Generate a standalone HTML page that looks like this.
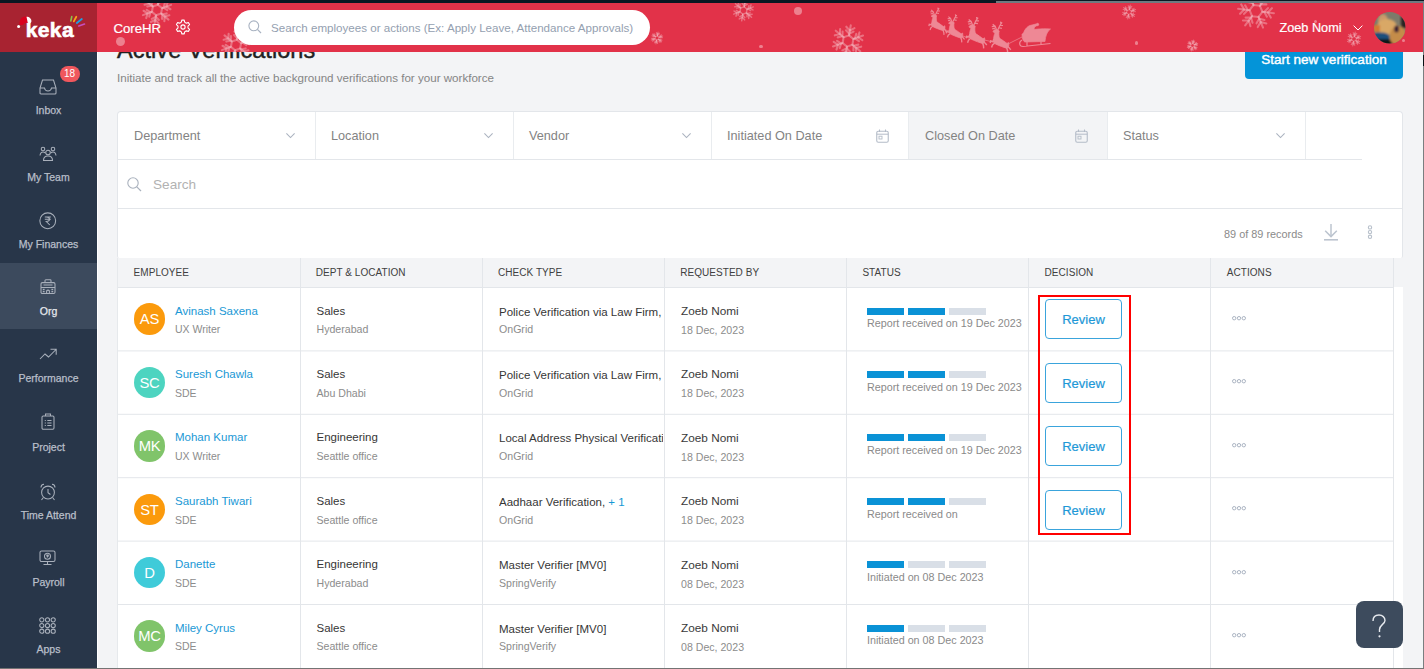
<!DOCTYPE html>
<html><head><meta charset="utf-8"><style>
*{box-sizing:border-box;margin:0;padding:0}
html,body{width:1424px;height:669px;overflow:hidden;background:#f3f4f6;font-family:"Liberation Sans",sans-serif}
body{position:relative}
.a{position:absolute}
.nw{white-space:nowrap}
svg{position:absolute;overflow:visible}
</style></head><body>
<div class="a nw " style="left:117px;top:38.70px;font-size:23.5px;line-height:23.5px;color:#222;letter-spacing:0.05px;-webkit-text-stroke:0.45px #222">Active Verifications</div>
<div class="a nw " style="left:117px;top:71.88px;font-size:11.6px;line-height:11.6px;color:#858585;">Initiate and track all the active background verifications for your workforce</div>
<div class="a" style="left:1245px;top:40px;width:158px;height:39px;background:#0494d8;border-radius:4px"></div>
<div class="a nw" style="left:1245.0px;width:158px;text-align:center;top:53.37px;font-size:13.5px;line-height:13.5px;color:#fff;-webkit-text-stroke:0.4px #fff">Start new verification</div>
<div class="a" style="left:117px;top:111px;width:1286px;height:147px;background:#fff;border:1px solid #e3e6ea;border-bottom:none;border-radius:4px 4px 2px 2px"></div>
<div class="a" style="left:908px;top:112px;width:199px;height:48px;background:#f3f4f6;"></div>
<div class="a" style="left:315px;top:112px;width:1px;height:48px;background:#e9ecef;"></div>
<div class="a nw " style="left:134px;top:129.75px;font-size:12.7px;line-height:12.7px;color:#838383;">Department</div>
<svg style="left:285.75px;top:131px" width="9" height="8" viewBox="0 0 9 8"><path d="M0.4 2.4 L4.5 6.6 L8.6 2.4" fill="none" stroke="#aab2bf" stroke-width="1.05"/></svg>
<div class="a" style="left:513px;top:112px;width:1px;height:48px;background:#e9ecef;"></div>
<div class="a nw " style="left:331px;top:129.75px;font-size:12.7px;line-height:12.7px;color:#838383;">Location</div>
<svg style="left:483.75px;top:131px" width="9" height="8" viewBox="0 0 9 8"><path d="M0.4 2.4 L4.5 6.6 L8.6 2.4" fill="none" stroke="#aab2bf" stroke-width="1.05"/></svg>
<div class="a" style="left:711px;top:112px;width:1px;height:48px;background:#e9ecef;"></div>
<div class="a nw " style="left:529px;top:129.75px;font-size:12.7px;line-height:12.7px;color:#838383;">Vendor</div>
<svg style="left:681.75px;top:131px" width="9" height="8" viewBox="0 0 9 8"><path d="M0.4 2.4 L4.5 6.6 L8.6 2.4" fill="none" stroke="#aab2bf" stroke-width="1.05"/></svg>
<div class="a" style="left:908px;top:112px;width:1px;height:48px;background:#e9ecef;"></div>
<div class="a nw " style="left:727px;top:129.75px;font-size:12.7px;line-height:12.7px;color:#838383;">Initiated On Date</div>
<svg style="left:876px;top:129px" width="13" height="14" viewBox="0 0 13 14"><rect x="0.75" y="2.25" width="11.5" height="11" rx="1.5" fill="none" stroke="#b4bcc8" stroke-width="1.1"/><line x1="0.75" y1="5.2" x2="12.25" y2="5.2" stroke="#b4bcc8" stroke-width="1"/><line x1="3.5" y1="0.5" x2="3.5" y2="3" stroke="#b4bcc8" stroke-width="1.1"/><line x1="9.5" y1="0.5" x2="9.5" y2="3" stroke="#b4bcc8" stroke-width="1.1"/><rect x="3" y="7.2" width="3" height="2.8" fill="none" stroke="#b4bcc8" stroke-width="0.9"/></svg>
<div class="a" style="left:1107px;top:112px;width:1px;height:48px;background:#e9ecef;"></div>
<div class="a nw " style="left:925px;top:129.75px;font-size:12.7px;line-height:12.7px;color:#838383;">Closed On Date</div>
<svg style="left:1075px;top:129px" width="13" height="14" viewBox="0 0 13 14"><rect x="0.75" y="2.25" width="11.5" height="11" rx="1.5" fill="none" stroke="#b4bcc8" stroke-width="1.1"/><line x1="0.75" y1="5.2" x2="12.25" y2="5.2" stroke="#b4bcc8" stroke-width="1"/><line x1="3.5" y1="0.5" x2="3.5" y2="3" stroke="#b4bcc8" stroke-width="1.1"/><line x1="9.5" y1="0.5" x2="9.5" y2="3" stroke="#b4bcc8" stroke-width="1.1"/><rect x="3" y="7.2" width="3" height="2.8" fill="none" stroke="#b4bcc8" stroke-width="0.9"/></svg>
<div class="a" style="left:1305px;top:112px;width:1px;height:48px;background:#e9ecef;"></div>
<div class="a nw " style="left:1123px;top:129.75px;font-size:12.7px;line-height:12.7px;color:#838383;">Status</div>
<svg style="left:1275.75px;top:131px" width="9" height="8" viewBox="0 0 9 8"><path d="M0.4 2.4 L4.5 6.6 L8.6 2.4" fill="none" stroke="#aab2bf" stroke-width="1.05"/></svg>
<div class="a" style="left:118px;top:159px;width:1244px;height:1px;background:#e3e6ea;"></div>
<svg style="left:127px;top:177px" width="15" height="15" viewBox="0 0 15 15"><circle cx="6" cy="6" r="5.2" fill="none" stroke="#a9b1bd" stroke-width="1.1"/><line x1="9.8" y1="9.8" x2="14" y2="14" stroke="#a9b1bd" stroke-width="1.2"/></svg>
<div class="a nw " style="left:153px;top:178.18px;font-size:13.6px;line-height:13.6px;color:#b2b2b2;">Search</div>
<div class="a" style="left:118px;top:208px;width:1284px;height:1px;background:#e3e6ea;"></div>
<div class="a nw " style="left:1224px;top:228.77px;font-size:10.9px;line-height:10.9px;color:#8a8a8a;">89 of 89 records</div>
<svg style="left:1322px;top:222px" width="18" height="20" viewBox="0 0 18 20"><line x1="9" y1="2" x2="9" y2="14.5" stroke="#bcc4cf" stroke-width="1.5"/><path d="M3.2 8.8 L9 14.6 L14.8 8.8" fill="none" stroke="#bcc4cf" stroke-width="1.5"/><line x1="2" y1="17.8" x2="16" y2="17.8" stroke="#bcc4cf" stroke-width="1.6"/></svg>
<svg style="left:1366px;top:224px" width="8" height="16" viewBox="0 0 8 16"><circle cx="4" cy="3.4" r="1.65" fill="none" stroke="#b8c0cb" stroke-width="1.1"/><circle cx="4" cy="8.1" r="1.65" fill="none" stroke="#b8c0cb" stroke-width="1.1"/><circle cx="4" cy="12.8" r="1.65" fill="none" stroke="#b8c0cb" stroke-width="1.1"/></svg>
<div class="a" style="left:117px;top:258px;width:1276px;height:30px;background:#f3f4f6;"></div>
<div class="a nw " style="left:133.6px;top:267.73px;font-size:10px;line-height:10px;color:#404040;letter-spacing:0.05px">EMPLOYEE</div>
<div class="a nw " style="left:315.8px;top:267.73px;font-size:10px;line-height:10px;color:#404040;letter-spacing:0.05px">DEPT &amp; LOCATION</div>
<div class="a nw " style="left:498.0px;top:267.73px;font-size:10px;line-height:10px;color:#404040;letter-spacing:0.05px">CHECK TYPE</div>
<div class="a nw " style="left:680.1999999999999px;top:267.73px;font-size:10px;line-height:10px;color:#404040;letter-spacing:0.05px">REQUESTED BY</div>
<div class="a nw " style="left:862.4px;top:267.73px;font-size:10px;line-height:10px;color:#404040;letter-spacing:0.05px">STATUS</div>
<div class="a nw " style="left:1044.6px;top:267.73px;font-size:10px;line-height:10px;color:#404040;letter-spacing:0.05px">DECISION</div>
<div class="a nw " style="left:1226.7999999999997px;top:267.73px;font-size:10px;line-height:10px;color:#404040;letter-spacing:0.05px">ACTIONS</div>
<div class="a" style="left:118px;top:287px;width:1285px;height:382px;background:#fff;"></div>
<div class="a" style="left:117px;top:258px;width:1px;height:411px;background:#e6e9ec;"></div>
<div class="a" style="left:300px;top:258px;width:1px;height:411px;background:#e3e6ea;"></div>
<div class="a" style="left:482px;top:258px;width:1px;height:411px;background:#e3e6ea;"></div>
<div class="a" style="left:664px;top:258px;width:1px;height:411px;background:#e3e6ea;"></div>
<div class="a" style="left:846px;top:258px;width:1px;height:411px;background:#e3e6ea;"></div>
<div class="a" style="left:1028px;top:258px;width:1px;height:411px;background:#e3e6ea;"></div>
<div class="a" style="left:1210px;top:258px;width:1px;height:411px;background:#e3e6ea;"></div>
<div class="a" style="left:1393px;top:258px;width:1px;height:411px;background:#e3e6ea;"></div>
<svg style="left:118px;top:0px" width="1275" height="669"><line x1="0" y1="287.50" x2="1275" y2="287.50" stroke="#e3e6ea" stroke-width="1"/></svg>
<div class="a nw" style="left:133.7px;top:303.3px;width:31.5px;height:31.5px;border-radius:50%;background:#fb9a0c;color:#fff;font-size:14.8px;line-height:32px;text-align:center;letter-spacing:-0.3px">AS</div>
<div class="a nw " style="left:175px;top:305.56px;font-size:11.5px;line-height:11.5px;color:#1a98d5;">Avinash Saxena</div>
<div class="a nw " style="left:175px;top:324.41px;font-size:10.5px;line-height:10.5px;color:#8c8c8c;">UX Writer</div>
<div class="a nw " style="left:316.5px;top:305.56px;font-size:11.5px;line-height:11.5px;color:#363636;">Sales</div>
<div class="a nw " style="left:316.5px;top:324.32px;font-size:10.6px;line-height:10.6px;color:#8c8c8c;">Hyderabad</div>
<div class="a nw" style="left:499px;top:306.66px;width:164px;overflow:hidden;font-size:11.5px;line-height:11.5px;color:#363636">Police Verification via Law Firm,</div>
<div class="a nw " style="left:499px;top:324.32px;font-size:10.6px;line-height:10.6px;color:#8c8c8c;">OnGrid</div>
<div class="a nw " style="left:681px;top:305.91px;font-size:11.8px;line-height:11.8px;color:#3a3a3a;">Zoeb Nomi</div>
<div class="a nw " style="left:681px;top:325.02px;font-size:10.6px;line-height:10.6px;color:#8c8c8c;">18 Dec, 2023</div>
<div class="a" style="left:867.0px;top:307.5px;width:37px;height:7px;background:#0a92d6;"></div>
<div class="a" style="left:907.8px;top:307.5px;width:37px;height:7px;background:#0a92d6;"></div>
<div class="a" style="left:948.6px;top:307.5px;width:37px;height:7px;background:#d9dfe7;"></div>
<div class="a nw " style="left:867px;top:318.40px;font-size:10.75px;line-height:10.75px;color:#8a8a8a;">Report received on 19 Dec 2023</div>
<div class="a nw" style="left:1045px;top:299.3px;width:77px;height:40px;border:1px solid #3aa4dc;border-radius:4px;color:#1e98d7;font-size:13px;line-height:40px;text-align:center;-webkit-text-stroke:0.2px #1e98d7">Review</div>
<svg style="left:1232px;top:315.9px" width="14" height="5" viewBox="0 0 14 5"><circle cx="2.2" cy="2.2" r="1.7" fill="none" stroke="#a2abbb" stroke-width="0.9"/><circle cx="7" cy="2.2" r="1.7" fill="none" stroke="#a2abbb" stroke-width="0.9"/><circle cx="11.8" cy="2.2" r="1.7" fill="none" stroke="#a2abbb" stroke-width="0.9"/></svg>
<svg style="left:118px;top:0px" width="1275" height="669"><line x1="0" y1="350.90" x2="1275" y2="350.90" stroke="#e3e6ea" stroke-width="1"/></svg>
<div class="a nw" style="left:133.7px;top:366.7px;width:31.5px;height:31.5px;border-radius:50%;background:#4dd4c0;color:#fff;font-size:14.8px;line-height:32px;text-align:center;letter-spacing:-0.3px">SC</div>
<div class="a nw " style="left:175px;top:368.96px;font-size:11.5px;line-height:11.5px;color:#1a98d5;">Suresh Chawla</div>
<div class="a nw " style="left:175px;top:387.81px;font-size:10.5px;line-height:10.5px;color:#8c8c8c;">SDE</div>
<div class="a nw " style="left:316.5px;top:368.96px;font-size:11.5px;line-height:11.5px;color:#363636;">Sales</div>
<div class="a nw " style="left:316.5px;top:387.72px;font-size:10.6px;line-height:10.6px;color:#8c8c8c;">Abu Dhabi</div>
<div class="a nw" style="left:499px;top:370.06px;width:164px;overflow:hidden;font-size:11.5px;line-height:11.5px;color:#363636">Police Verification via Law Firm,</div>
<div class="a nw " style="left:499px;top:387.72px;font-size:10.6px;line-height:10.6px;color:#8c8c8c;">OnGrid</div>
<div class="a nw " style="left:681px;top:369.31px;font-size:11.8px;line-height:11.8px;color:#3a3a3a;">Zoeb Nomi</div>
<div class="a nw " style="left:681px;top:388.42px;font-size:10.6px;line-height:10.6px;color:#8c8c8c;">18 Dec, 2023</div>
<div class="a" style="left:867.0px;top:370.9px;width:37px;height:7px;background:#0a92d6;"></div>
<div class="a" style="left:907.8px;top:370.9px;width:37px;height:7px;background:#0a92d6;"></div>
<div class="a" style="left:948.6px;top:370.9px;width:37px;height:7px;background:#d9dfe7;"></div>
<div class="a nw " style="left:867px;top:381.80px;font-size:10.75px;line-height:10.75px;color:#8a8a8a;">Report received on 19 Dec 2023</div>
<div class="a nw" style="left:1045px;top:362.7px;width:77px;height:40px;border:1px solid #3aa4dc;border-radius:4px;color:#1e98d7;font-size:13px;line-height:40px;text-align:center;-webkit-text-stroke:0.2px #1e98d7">Review</div>
<svg style="left:1232px;top:379.29999999999995px" width="14" height="5" viewBox="0 0 14 5"><circle cx="2.2" cy="2.2" r="1.7" fill="none" stroke="#a2abbb" stroke-width="0.9"/><circle cx="7" cy="2.2" r="1.7" fill="none" stroke="#a2abbb" stroke-width="0.9"/><circle cx="11.8" cy="2.2" r="1.7" fill="none" stroke="#a2abbb" stroke-width="0.9"/></svg>
<svg style="left:118px;top:0px" width="1275" height="669"><line x1="0" y1="414.30" x2="1275" y2="414.30" stroke="#e3e6ea" stroke-width="1"/></svg>
<div class="a nw" style="left:133.7px;top:430.1px;width:31.5px;height:31.5px;border-radius:50%;background:#80c46a;color:#fff;font-size:14.8px;line-height:32px;text-align:center;letter-spacing:-0.3px">MK</div>
<div class="a nw " style="left:175px;top:432.36px;font-size:11.5px;line-height:11.5px;color:#1a98d5;">Mohan Kumar</div>
<div class="a nw " style="left:175px;top:451.21px;font-size:10.5px;line-height:10.5px;color:#8c8c8c;">UX Writer</div>
<div class="a nw " style="left:316.5px;top:432.36px;font-size:11.5px;line-height:11.5px;color:#363636;">Engineering</div>
<div class="a nw " style="left:316.5px;top:451.12px;font-size:10.6px;line-height:10.6px;color:#8c8c8c;">Seattle office</div>
<div class="a nw" style="left:499px;top:433.46px;width:164px;overflow:hidden;font-size:11.5px;line-height:11.5px;color:#363636">Local Address Physical Verification</div>
<div class="a nw " style="left:499px;top:451.12px;font-size:10.6px;line-height:10.6px;color:#8c8c8c;">OnGrid</div>
<div class="a nw " style="left:681px;top:432.71px;font-size:11.8px;line-height:11.8px;color:#3a3a3a;">Zoeb Nomi</div>
<div class="a nw " style="left:681px;top:451.82px;font-size:10.6px;line-height:10.6px;color:#8c8c8c;">18 Dec, 2023</div>
<div class="a" style="left:867.0px;top:434.3px;width:37px;height:7px;background:#0a92d6;"></div>
<div class="a" style="left:907.8px;top:434.3px;width:37px;height:7px;background:#0a92d6;"></div>
<div class="a" style="left:948.6px;top:434.3px;width:37px;height:7px;background:#d9dfe7;"></div>
<div class="a nw " style="left:867px;top:445.20px;font-size:10.75px;line-height:10.75px;color:#8a8a8a;">Report received on 19 Dec 2023</div>
<div class="a nw" style="left:1045px;top:426.1px;width:77px;height:40px;border:1px solid #3aa4dc;border-radius:4px;color:#1e98d7;font-size:13px;line-height:40px;text-align:center;-webkit-text-stroke:0.2px #1e98d7">Review</div>
<svg style="left:1232px;top:442.7px" width="14" height="5" viewBox="0 0 14 5"><circle cx="2.2" cy="2.2" r="1.7" fill="none" stroke="#a2abbb" stroke-width="0.9"/><circle cx="7" cy="2.2" r="1.7" fill="none" stroke="#a2abbb" stroke-width="0.9"/><circle cx="11.8" cy="2.2" r="1.7" fill="none" stroke="#a2abbb" stroke-width="0.9"/></svg>
<svg style="left:118px;top:0px" width="1275" height="669"><line x1="0" y1="477.70" x2="1275" y2="477.70" stroke="#e3e6ea" stroke-width="1"/></svg>
<div class="a nw" style="left:133.7px;top:493.5px;width:31.5px;height:31.5px;border-radius:50%;background:#fb9a0c;color:#fff;font-size:14.8px;line-height:32px;text-align:center;letter-spacing:-0.3px">ST</div>
<div class="a nw " style="left:175px;top:495.76px;font-size:11.5px;line-height:11.5px;color:#1a98d5;">Saurabh Tiwari</div>
<div class="a nw " style="left:175px;top:514.61px;font-size:10.5px;line-height:10.5px;color:#8c8c8c;">SDE</div>
<div class="a nw " style="left:316.5px;top:495.76px;font-size:11.5px;line-height:11.5px;color:#363636;">Sales</div>
<div class="a nw " style="left:316.5px;top:514.52px;font-size:10.6px;line-height:10.6px;color:#8c8c8c;">Seattle office</div>
<div class="a nw" style="left:499px;top:496.86px;width:164px;overflow:hidden;font-size:11.5px;line-height:11.5px;color:#363636">Aadhaar Verification, <span style="color:#1598d5">+ 1</span></div>
<div class="a nw " style="left:499px;top:514.52px;font-size:10.6px;line-height:10.6px;color:#8c8c8c;">OnGrid</div>
<div class="a nw " style="left:681px;top:496.11px;font-size:11.8px;line-height:11.8px;color:#3a3a3a;">Zoeb Nomi</div>
<div class="a nw " style="left:681px;top:515.22px;font-size:10.6px;line-height:10.6px;color:#8c8c8c;">18 Dec, 2023</div>
<div class="a" style="left:867.0px;top:497.7px;width:37px;height:7px;background:#0a92d6;"></div>
<div class="a" style="left:907.8px;top:497.7px;width:37px;height:7px;background:#0a92d6;"></div>
<div class="a" style="left:948.6px;top:497.7px;width:37px;height:7px;background:#d9dfe7;"></div>
<div class="a nw " style="left:867px;top:508.60px;font-size:10.75px;line-height:10.75px;color:#8a8a8a;">Report received on</div>
<div class="a nw" style="left:1045px;top:489.5px;width:77px;height:40px;border:1px solid #3aa4dc;border-radius:4px;color:#1e98d7;font-size:13px;line-height:40px;text-align:center;-webkit-text-stroke:0.2px #1e98d7">Review</div>
<svg style="left:1232px;top:506.09999999999997px" width="14" height="5" viewBox="0 0 14 5"><circle cx="2.2" cy="2.2" r="1.7" fill="none" stroke="#a2abbb" stroke-width="0.9"/><circle cx="7" cy="2.2" r="1.7" fill="none" stroke="#a2abbb" stroke-width="0.9"/><circle cx="11.8" cy="2.2" r="1.7" fill="none" stroke="#a2abbb" stroke-width="0.9"/></svg>
<svg style="left:118px;top:0px" width="1275" height="669"><line x1="0" y1="541.10" x2="1275" y2="541.10" stroke="#e3e6ea" stroke-width="1"/></svg>
<div class="a nw" style="left:133.7px;top:556.9px;width:31.5px;height:31.5px;border-radius:50%;background:#3fcbd9;color:#fff;font-size:14.8px;line-height:32px;text-align:center;letter-spacing:-0.3px">D</div>
<div class="a nw " style="left:175px;top:559.16px;font-size:11.5px;line-height:11.5px;color:#1a98d5;">Danette</div>
<div class="a nw " style="left:175px;top:578.01px;font-size:10.5px;line-height:10.5px;color:#8c8c8c;">SDE</div>
<div class="a nw " style="left:316.5px;top:559.16px;font-size:11.5px;line-height:11.5px;color:#363636;">Engineering</div>
<div class="a nw " style="left:316.5px;top:577.92px;font-size:10.6px;line-height:10.6px;color:#8c8c8c;">Hyderabad</div>
<div class="a nw" style="left:499px;top:560.26px;width:164px;overflow:hidden;font-size:11.5px;line-height:11.5px;color:#363636">Master Verifier [MV0]</div>
<div class="a nw " style="left:499px;top:577.92px;font-size:10.6px;line-height:10.6px;color:#8c8c8c;">SpringVerify</div>
<div class="a nw " style="left:681px;top:559.51px;font-size:11.8px;line-height:11.8px;color:#3a3a3a;">Zoeb Nomi</div>
<div class="a nw " style="left:681px;top:578.62px;font-size:10.6px;line-height:10.6px;color:#8c8c8c;">08 Dec, 2023</div>
<div class="a" style="left:867.0px;top:561.1px;width:37px;height:7px;background:#0a92d6;"></div>
<div class="a" style="left:907.8px;top:561.1px;width:37px;height:7px;background:#d9dfe7;"></div>
<div class="a" style="left:948.6px;top:561.1px;width:37px;height:7px;background:#d9dfe7;"></div>
<div class="a nw " style="left:867px;top:572.00px;font-size:10.75px;line-height:10.75px;color:#8a8a8a;">Initiated on 08 Dec 2023</div>
<svg style="left:1232px;top:569.5px" width="14" height="5" viewBox="0 0 14 5"><circle cx="2.2" cy="2.2" r="1.7" fill="none" stroke="#a2abbb" stroke-width="0.9"/><circle cx="7" cy="2.2" r="1.7" fill="none" stroke="#a2abbb" stroke-width="0.9"/><circle cx="11.8" cy="2.2" r="1.7" fill="none" stroke="#a2abbb" stroke-width="0.9"/></svg>
<svg style="left:118px;top:0px" width="1275" height="669"><line x1="0" y1="604.50" x2="1275" y2="604.50" stroke="#e3e6ea" stroke-width="1"/></svg>
<div class="a nw" style="left:133.7px;top:620.3px;width:31.5px;height:31.5px;border-radius:50%;background:#80c46a;color:#fff;font-size:14.8px;line-height:32px;text-align:center;letter-spacing:-0.3px">MC</div>
<div class="a nw " style="left:175px;top:622.56px;font-size:11.5px;line-height:11.5px;color:#1a98d5;">Miley Cyrus</div>
<div class="a nw " style="left:175px;top:641.41px;font-size:10.5px;line-height:10.5px;color:#8c8c8c;">SDE</div>
<div class="a nw " style="left:316.5px;top:622.56px;font-size:11.5px;line-height:11.5px;color:#363636;">Sales</div>
<div class="a nw " style="left:316.5px;top:641.32px;font-size:10.6px;line-height:10.6px;color:#8c8c8c;">Seattle office</div>
<div class="a nw" style="left:499px;top:623.66px;width:164px;overflow:hidden;font-size:11.5px;line-height:11.5px;color:#363636">Master Verifier [MV0]</div>
<div class="a nw " style="left:499px;top:641.32px;font-size:10.6px;line-height:10.6px;color:#8c8c8c;">SpringVerify</div>
<div class="a nw " style="left:681px;top:622.91px;font-size:11.8px;line-height:11.8px;color:#3a3a3a;">Zoeb Nomi</div>
<div class="a nw " style="left:681px;top:642.02px;font-size:10.6px;line-height:10.6px;color:#8c8c8c;">08 Dec, 2023</div>
<div class="a" style="left:867.0px;top:624.5px;width:37px;height:7px;background:#0a92d6;"></div>
<div class="a" style="left:907.8px;top:624.5px;width:37px;height:7px;background:#d9dfe7;"></div>
<div class="a" style="left:948.6px;top:624.5px;width:37px;height:7px;background:#d9dfe7;"></div>
<div class="a nw " style="left:867px;top:635.40px;font-size:10.75px;line-height:10.75px;color:#8a8a8a;">Initiated on 08 Dec 2023</div>
<svg style="left:1232px;top:632.9px" width="14" height="5" viewBox="0 0 14 5"><circle cx="2.2" cy="2.2" r="1.7" fill="none" stroke="#a2abbb" stroke-width="0.9"/><circle cx="7" cy="2.2" r="1.7" fill="none" stroke="#a2abbb" stroke-width="0.9"/><circle cx="11.8" cy="2.2" r="1.7" fill="none" stroke="#a2abbb" stroke-width="0.9"/></svg>
<div class="a" style="left:1038px;top:295px;width:93px;height:240px;border:2.5px solid #ff0000"></div>
<div class="a" style="left:1356px;top:601px;width:47px;height:47px;border-radius:8px;background:#3d4b5d"></div>
<svg style="left:1370px;top:614px" width="18" height="26" viewBox="0 0 18 26"><path d="M3 7 C3 2.5 6 1 9 1 C12.5 1 15 3.5 15 6.5 C15 10 9.5 11 9.5 15.5 L9.5 18" fill="none" stroke="#e6e9ee" stroke-width="1.4"/><circle cx="9.5" cy="22.3" r="1.1" fill="#e6e9ee"/></svg>
<div class="a" style="left:0px;top:0px;width:1424px;height:3px;background:#0b1722;"></div>
<div class="a" style="left:996px;top:1px;width:428px;height:2px;background:#6f7a80;"></div>
<div class="a" style="left:0;top:3px;width:1424px;height:49px;background:#e23249;overflow:hidden">
<svg style="left:0;top:0" width="0" height="0"><defs><g id="arm"><line x1="0" y1="-3.6" x2="0" y2="-10"/><polyline points="-2.6,-8.6 0,-6.6 2.6,-8.6"/><polyline points="-2.4,-6.4 0,-4.6 2.4,-6.4"/></g><g id="sf"><use href="#arm"/><use href="#arm" transform="rotate(60)"/><use href="#arm" transform="rotate(120)"/><use href="#arm" transform="rotate(180)"/><use href="#arm" transform="rotate(240)"/><use href="#arm" transform="rotate(300)"/><polygon points="0,-3.6 3.12,-1.8 3.12,1.8 0,3.6 -3.12,1.8 -3.12,-1.8"/></g></defs></svg>
<svg style="left:139.5px;top:-9.6px" width="34" height="34" viewBox="-11.333333333333334 -11.333333333333334 22.666666666666668 22.666666666666668"><use href="#sf" transform="rotate(10)" stroke="rgba(255,255,255,0.3)" stroke-width="1.40" fill="none" stroke-linecap="round"/></svg>
<svg style="left:218.5px;top:25.4px" width="34" height="34" viewBox="-11.333333333333334 -11.333333333333334 22.666666666666668 22.666666666666668"><use href="#sf" transform="rotate(10)" stroke="rgba(255,255,255,0.3)" stroke-width="1.40" fill="none" stroke-linecap="round"/></svg>
<div class="a" style="left:116.0px;top:33.5px;width:9.0px;height:9.0px;border-radius:50%;background:rgba(255,255,255,0.38)"></div>
<svg style="left:649.4px;top:27.4px" width="16" height="16" viewBox="-13.333333333333334 -13.333333333333334 26.666666666666668 26.666666666666668"><use href="#sf" transform="rotate(10)" stroke="rgba(255,255,255,0.3)" stroke-width="1.83" fill="none" stroke-linecap="round"/></svg>
<svg style="left:730.5px;top:-5.0px" width="25.0" height="25.0" viewBox="-11.904761904761905 -11.904761904761905 23.80952380952381 23.80952380952381"><use href="#sf" transform="rotate(10)" stroke="rgba(255,255,255,0.3)" stroke-width="1.43" fill="none" stroke-linecap="round"/></svg>
<div class="a" style="left:793.5px;top:3.9000000000000004px;width:8px;height:8px;border-radius:50%;background:rgba(255,255,255,0.38)"></div>
<div class="a" style="left:759.4px;top:42.0px;width:3.2px;height:3.2px;border-radius:50%;background:rgba(255,255,255,0.38)"></div>
<svg style="left:830px;top:20.299999999999997px" width="36" height="36" viewBox="-11.25 -11.25 22.5 22.5"><use href="#sf" transform="rotate(10)" stroke="rgba(255,255,255,0.3)" stroke-width="1.31" fill="none" stroke-linecap="round"/></svg>
<svg style="left:1119.7px;top:0.40000000000000036px" width="18" height="18" viewBox="-12.857142857142858 -12.857142857142858 25.714285714285715 25.714285714285715"><use href="#sf" transform="rotate(10)" stroke="rgba(255,255,255,0.3)" stroke-width="1.57" fill="none" stroke-linecap="round"/></svg>
<div class="a" style="left:1134.9px;top:38.4px;width:3.2px;height:3.2px;border-radius:50%;background:rgba(255,255,255,0.38)"></div>
<svg style="left:1235.5px;top:-12.5px" width="40" height="40" viewBox="-11.11111111111111 -11.11111111111111 22.22222222222222 22.22222222222222"><use href="#sf" transform="rotate(37)" stroke="rgba(255,255,255,0.3)" stroke-width="1.17" fill="none" stroke-linecap="round"/></svg>
<svg style="left:1184.8px;top:34.5px" width="15.0" height="15.0" viewBox="-13.636363636363637 -13.636363636363637 27.272727272727273 27.272727272727273"><use href="#sf" transform="rotate(10)" stroke="rgba(255,255,255,0.3)" stroke-width="2.00" fill="none" stroke-linecap="round"/></svg>
<svg style="left:1345px;top:27.299999999999997px" width="18" height="18" viewBox="-12.857142857142858 -12.857142857142858 25.714285714285715 25.714285714285715"><use href="#sf" transform="rotate(10)" stroke="rgba(255,255,255,0.3)" stroke-width="1.57" fill="none" stroke-linecap="round"/></svg>
<div class="a" style="left:1401.5px;top:36.0px;width:3.0px;height:3.0px;border-radius:50%;background:rgba(255,255,255,0.38)"></div>
<div class="a" style="left:1313.5px;top:16.5px;width:3.0px;height:3.0px;border-radius:50%;background:rgba(255,255,255,0.38)"></div>
<svg style="left:926px;top:0px" width="130" height="49" viewBox="0 0 130 49"><g fill="#fff" stroke="#fff" stroke-width="0.7" opacity="0.42"><g transform="translate(2.7 4.7) scale(0.97)"><path d="M2.6 16.2 C4 14.8 6.5 14.2 8.5 14.8 C11 16.2 13.5 18.3 15.2 19.4 L16.6 18.6 L16.8 20.8 C16.6 22.6 15.8 23.6 14.6 23.6 C12 23 9 21.6 6.4 20.6 C4.4 19.8 2.8 18.6 2.6 16.2 Z"/><path d="M3.2 16.5 C3.2 14 3.6 11.8 4.6 9.8 L3.4 9.6 L2.6 8.6 L4.2 7.2 L6.6 7 L8.2 8.2 C7.6 10.4 7.8 12.8 8.6 15.4 Z"/><path d="M4 18 L0.6 17.2 L0.2 19 M4.2 19 L2.2 20.8 L1.4 23 M14.6 22.6 L15.6 25.6 L15.8 28 M15.8 21.8 L17.6 24 L18.6 25" fill="none" stroke-width="1.3"/><path d="M5.8 7.2 L4.6 4 L2.4 2.2 M4.6 4 L1.6 4.4 M4.4 5.8 L2 6.4 M7 7.2 L8.8 3.4 L10.8 0.6 M8.8 3.4 L11.6 3.4 M8 5.4 L10.6 6 M9.8 2 L9.4 0" fill="none" stroke-width="1.1"/></g><g transform="translate(20 11.4) scale(1.0)"><path d="M2.6 16.2 C4 14.8 6.5 14.2 8.5 14.8 C11 16.2 13.5 18.3 15.2 19.4 L16.6 18.6 L16.8 20.8 C16.6 22.6 15.8 23.6 14.6 23.6 C12 23 9 21.6 6.4 20.6 C4.4 19.8 2.8 18.6 2.6 16.2 Z"/><path d="M3.2 16.5 C3.2 14 3.6 11.8 4.6 9.8 L3.4 9.6 L2.6 8.6 L4.2 7.2 L6.6 7 L8.2 8.2 C7.6 10.4 7.8 12.8 8.6 15.4 Z"/><path d="M4 18 L0.6 17.2 L0.2 19 M4.2 19 L2.2 20.8 L1.4 23 M14.6 22.6 L15.6 25.6 L15.8 28 M15.8 21.8 L17.6 24 L18.6 25" fill="none" stroke-width="1.3"/><path d="M5.8 7.2 L4.6 4 L2.4 2.2 M4.6 4 L1.6 4.4 M4.4 5.8 L2 6.4 M7 7.2 L8.8 3.4 L10.8 0.6 M8.8 3.4 L11.6 3.4 M8 5.4 L10.6 6 M9.8 2 L9.4 0" fill="none" stroke-width="1.1"/></g><g transform="translate(40 14) scale(1.12)"><path d="M2.6 16.2 C4 14.8 6.5 14.2 8.5 14.8 C11 16.2 13.5 18.3 15.2 19.4 L16.6 18.6 L16.8 20.8 C16.6 22.6 15.8 23.6 14.6 23.6 C12 23 9 21.6 6.4 20.6 C4.4 19.8 2.8 18.6 2.6 16.2 Z"/><path d="M3.2 16.5 C3.2 14 3.6 11.8 4.6 9.8 L3.4 9.6 L2.6 8.6 L4.2 7.2 L6.6 7 L8.2 8.2 C7.6 10.4 7.8 12.8 8.6 15.4 Z"/><path d="M4 18 L0.6 17.2 L0.2 19 M4.2 19 L2.2 20.8 L1.4 23 M14.6 22.6 L15.6 25.6 L15.8 28 M15.8 21.8 L17.6 24 L18.6 25" fill="none" stroke-width="1.3"/><path d="M5.8 7.2 L4.6 4 L2.4 2.2 M4.6 4 L1.6 4.4 M4.4 5.8 L2 6.4 M7 7.2 L8.8 3.4 L10.8 0.6 M8.8 3.4 L11.6 3.4 M8 5.4 L10.6 6 M9.8 2 L9.4 0" fill="none" stroke-width="1.1"/></g><g transform="translate(64 18.7) scale(1.12)"><path d="M2.6 16.2 C4 14.8 6.5 14.2 8.5 14.8 C11 16.2 13.5 18.3 15.2 19.4 L16.6 18.6 L16.8 20.8 C16.6 22.6 15.8 23.6 14.6 23.6 C12 23 9 21.6 6.4 20.6 C4.4 19.8 2.8 18.6 2.6 16.2 Z"/><path d="M3.2 16.5 C3.2 14 3.6 11.8 4.6 9.8 L3.4 9.6 L2.6 8.6 L4.2 7.2 L6.6 7 L8.2 8.2 C7.6 10.4 7.8 12.8 8.6 15.4 Z"/><path d="M4 18 L0.6 17.2 L0.2 19 M4.2 19 L2.2 20.8 L1.4 23 M14.6 22.6 L15.6 25.6 L15.8 28 M15.8 21.8 L17.6 24 L18.6 25" fill="none" stroke-width="1.3"/><path d="M5.8 7.2 L4.6 4 L2.4 2.2 M4.6 4 L1.6 4.4 M4.4 5.8 L2 6.4 M7 7.2 L8.8 3.4 L10.8 0.6 M8.8 3.4 L11.6 3.4 M8 5.4 L10.6 6 M9.8 2 L9.4 0" fill="none" stroke-width="1.1"/></g><path d="M18 26 L22 28 M36.5 33 L43 35 M58.5 37 L67 39 M82 41 L96 34" fill="none" stroke-width="0.7"/><path d="M96 31 C99 30 102 29 104 28 C108 26 114 25.5 124.5 26 C121 28.5 119.5 33 119 38.5 L99 39 C97 38.5 96 35 96 31 Z"/><path d="M97 32 C98 27 101 23.5 104 22.5 L110 21 L111 22.5 L108.5 24 C108 27 107 30 105.5 32 Z"/><circle cx="111.5" cy="21.5" r="1.2"/><path d="M96 37 C92.5 39 93 43.5 97 43.5 L124.5 40.5 M101 39 L101 43 M115 38.5 L115 41.5" fill="none" stroke-width="1.2"/></g></svg>
</div>
<div class="a" style="left:0px;top:3px;width:97px;height:49px;background:#a82331;"></div>
<div class="a nw " style="left:25.8px;top:19.02px;font-size:21px;line-height:21px;color:#fff;font-weight:bold;letter-spacing:0.35px;-webkit-text-stroke:0.6px #fff">keka</div>
<svg style="left:16px;top:15px" width="18" height="14" viewBox="0 0 18 14"><path d="M3.5 10 C3 5 5.5 1.5 9.5 1.5 C12.5 1.5 14.5 3 14.5 5 L12.5 8 C10.5 7.5 8 8.2 7 10 Z" fill="#d9001e"/><path d="M10.5 1.8 C13.5 1.8 15.8 3.8 15.3 7 L13.2 9.6 L11.6 7 Z" fill="#fff"/><circle cx="2.6" cy="11.4" r="1.5" fill="#fff"/></svg>
<svg style="left:69px;top:15px" width="18" height="13" viewBox="0 0 18 13"><line x1="1.8" y1="6" x2="2.8" y2="1.5" stroke="#8bc34a" stroke-width="1.6" stroke-linecap="round"/><line x1="4.8" y1="6.4" x2="7.3" y2="1.8" stroke="#f7a21b" stroke-width="1.8" stroke-linecap="round"/><line x1="7.8" y1="8" x2="12.8" y2="4" stroke="#1da1e2" stroke-width="1.8" stroke-linecap="round"/><line x1="9.8" y1="11" x2="15.5" y2="9" stroke="#c64fbd" stroke-width="1.6" stroke-linecap="round"/></svg>
<div class="a nw " style="left:113.5px;top:21.82px;font-size:13.2px;line-height:13.2px;color:#fff;-webkit-text-stroke:0.2px #fff">CoreHR</div>
<svg style="left:173.5px;top:18px" width="18" height="18" viewBox="-9 -9 18 18"><path d="M-2.45 -4.24 L-1.55 -5.07 L-1.22 -6.89 L1.22 -6.89 L1.55 -5.07 L2.45 -4.24 L3.61 -3.88 L5.36 -4.50 L6.58 -2.39 L5.16 -1.19 L4.90 0.00 L5.16 1.19 L6.58 2.39 L5.36 4.50 L3.61 3.88 L2.45 4.24 L1.55 5.07 L1.22 6.89 L-1.22 6.89 L-1.55 5.07 L-2.45 4.24 L-3.61 3.88 L-5.36 4.50 L-6.58 2.39 L-5.16 1.19 L-4.90 0.00 L-5.16 -1.19 L-6.58 -2.39 L-5.36 -4.50 L-3.61 -3.88 Z" fill="none" stroke="#fff" stroke-width="1.1" stroke-linejoin="round"/><circle cx="0" cy="0" r="2.1" fill="none" stroke="#fff" stroke-width="1.1"/></svg>
<div class="a" style="left:234px;top:10px;width:416px;height:35px;background:#fff;border-radius:18px"></div>
<svg style="left:248px;top:20px" width="14" height="14" viewBox="0 0 14 14"><circle cx="5.8" cy="5.8" r="4.9" fill="none" stroke="#a9b3c2" stroke-width="1.1"/><line x1="9.4" y1="9.4" x2="13" y2="13" stroke="#a9b3c2" stroke-width="1.2"/></svg>
<div class="a nw " style="left:271px;top:22.18px;font-size:11.6px;line-height:11.6px;color:#94a0b0;">Search employees or actions (Ex: Apply Leave, Attendance Approvals)</div>
<div class="a nw " style="left:1279.5px;top:21.75px;font-size:12.7px;line-height:12.7px;color:#fff;-webkit-text-stroke:0.2px #fff">Zoeb Nomi</div>
<svg style="left:1353px;top:25px" width="10" height="6" viewBox="0 0 10 6"><path d="M0.6 0.6 L5 5 L9.4 0.6" fill="none" stroke="#fff" stroke-width="1"/></svg>
<svg style="left:1373.6px;top:12.4px" width="31.5" height="31.5" viewBox="0 0 31.5 31.5"><defs><clipPath id="avc"><circle cx="15.75" cy="15.75" r="15.75"/></clipPath><filter id="avb" x="-20%" y="-20%" width="140%" height="140%"><feGaussianBlur stdDeviation="0.9"/></filter></defs><g clip-path="url(#avc)"><rect width="31.5" height="31.5" fill="#7d7a6a"/><g filter="url(#avb)"><rect x="27" y="4" width="6" height="12" fill="#2a2320"/><ellipse cx="9" cy="9" rx="5" ry="7" fill="#c99a6a"/><ellipse cx="13" cy="15" rx="10" ry="8" fill="#d9a866"/><rect x="-1" y="13" width="7" height="7" fill="#d27a32"/><ellipse cx="7" cy="25" rx="9" ry="4.5" fill="#1f4f7c"/><rect x="0" y="27" width="20" height="6" fill="#101418"/><ellipse cx="24" cy="24" rx="8.5" ry="10" fill="#c48c48"/><ellipse cx="22.5" cy="17" rx="2.5" ry="3.5" fill="#3c2436"/></g></g></svg>
<div class="a" style="left:0px;top:52px;width:97px;height:617px;background:#283649;"></div>
<div class="a" style="left:97px;top:52px;width:1px;height:617px;background:#ffffff;"></div>
<div class="a" style="left:0px;top:263px;width:97px;height:66px;background:#3c4a5d;"></div>
<div class="a nw" style="left:0.0px;width:97px;text-align:center;top:105.21px;font-size:10.5px;line-height:10.5px;color:#b9bfc9;-webkit-text-stroke:0.25px #b9bfc9">Inbox</div>
<div class="a nw" style="left:0.0px;width:97px;text-align:center;top:172.41px;font-size:10.5px;line-height:10.5px;color:#b9bfc9;-webkit-text-stroke:0.25px #b9bfc9">My Team</div>
<div class="a nw" style="left:0.0px;width:97px;text-align:center;top:239.01px;font-size:10.5px;line-height:10.5px;color:#b9bfc9;-webkit-text-stroke:0.25px #b9bfc9">My Finances</div>
<div class="a nw" style="left:0.0px;width:97px;text-align:center;top:305.81px;font-size:10.5px;line-height:10.5px;color:#e6e9ee;-webkit-text-stroke:0.25px #e6e9ee">Org</div>
<div class="a nw" style="left:0.0px;width:97px;text-align:center;top:372.91px;font-size:10.5px;line-height:10.5px;color:#b9bfc9;-webkit-text-stroke:0.25px #b9bfc9">Performance</div>
<div class="a nw" style="left:0.0px;width:97px;text-align:center;top:442.41px;font-size:10.5px;line-height:10.5px;color:#b9bfc9;-webkit-text-stroke:0.25px #b9bfc9">Project</div>
<div class="a nw" style="left:0.0px;width:97px;text-align:center;top:510.41px;font-size:10.5px;line-height:10.5px;color:#b9bfc9;-webkit-text-stroke:0.25px #b9bfc9">Time Attend</div>
<div class="a nw" style="left:0.0px;width:97px;text-align:center;top:577.01px;font-size:10.5px;line-height:10.5px;color:#b9bfc9;-webkit-text-stroke:0.25px #b9bfc9">Payroll</div>
<div class="a nw" style="left:0.0px;width:97px;text-align:center;top:644.11px;font-size:10.5px;line-height:10.5px;color:#b9bfc9;-webkit-text-stroke:0.25px #b9bfc9">Apps</div>
<svg style="left:39px;top:78.5px" width="18" height="16" viewBox="0 0 18 16" fill="none" stroke="#a9b0bb" stroke-width="1.05"><path d="M3.5 1 H14.5 L17 9 V14 Q17 15 16 15 H2 Q1 15 1 14 V9 Z"/><path d="M1 9 H5.5 Q6 12 9 12 Q12 12 12.5 9 H17"/></svg>
<div class="a nw" style="left:59.5px;top:65.5px;width:20px;height:16.5px;border-radius:9px;background:#f0575d;color:#fff;font-size:10px;line-height:16.5px;text-align:center">18</div>
<svg style="left:38.5px;top:146px" width="18" height="15" viewBox="0 0 18 15" fill="none" stroke="#a9b0bb" stroke-width="1.05"><circle cx="4" cy="3" r="1.8"/><circle cx="14" cy="3" r="1.8"/><circle cx="9" cy="6.5" r="2.3"/><path d="M1 9.5 Q1.5 6 4 6 Q5.5 6 6 7"/><path d="M17 9.5 Q16.5 6 14 6 Q12.5 6 12 7"/><path d="M4.5 14.5 Q4.5 10 9 10 Q13.5 10 13.5 14.5 Z"/></svg>
<svg style="left:39px;top:211.5px" width="17.5" height="17.5" viewBox="0 0 17.5 17.5" fill="none" stroke="#a9b0bb" stroke-width="1.05"><circle cx="8.75" cy="8.75" r="7.9"/><path d="M5.8 5 H11.8 M5.8 7.3 H11.8 M7.3 5 Q10.5 5 10.5 7.3 Q10.5 9.5 7.3 9.5 L10.8 13"/></svg>
<svg style="left:39.5px;top:279px" width="16" height="15" viewBox="0 0 16 15" fill="none" stroke="#a9b0bb" stroke-width="1.05"><rect x="1" y="3.6" width="14" height="10.9" rx="1.3"/><path d="M5 3.6 V1.6 Q5 0.8 5.8 0.8 H10.2 Q11 0.8 11 1.6 V3.6 M3.5 6 H12.5 M1 8.4 H15 M6.6 14.5 V11.8 Q8 10.4 9.4 11.8 V14.5"/><rect x="2.8" y="9.8" width="1.8" height="1.4" fill="#a9b0bb" stroke="none"/><rect x="11.4" y="9.8" width="1.8" height="1.4" fill="#a9b0bb" stroke="none"/><rect x="2.8" y="12" width="1.8" height="1.3" fill="#a9b0bb" stroke="none"/><rect x="11.4" y="12" width="1.8" height="1.3" fill="#a9b0bb" stroke="none"/></svg>
<svg style="left:38.5px;top:347.5px" width="18" height="12" viewBox="0 0 18 12" fill="none" stroke="#a9b0bb" stroke-width="1.05"><path d="M1 11 L6 6 L9.5 9 L17 1.5 M11.5 1.2 H17.2 V6.8"/></svg>
<svg style="left:41px;top:412.5px" width="14" height="17" viewBox="0 0 14 17" fill="none" stroke="#a9b0bb" stroke-width="1.05"><rect x="1" y="3" width="12" height="13.2" rx="1.2"/><path d="M4.5 3 V1 H9.5 V3 M3.8 7.5 H4.8 M6.3 7.5 H10.5 M3.8 10 H4.8 M6.3 10 H10.5 M3.8 12.5 H4.8 M6.3 12.5 H10.5"/></svg>
<svg style="left:38.5px;top:482.5px" width="18" height="18" viewBox="0 0 18 18" fill="none" stroke="#a9b0bb" stroke-width="1.05"><circle cx="9" cy="9.5" r="6.4"/><path d="M9 6 V9.8 L11.4 11.5 M2 4.5 Q2 1.5 5 1.3 M16 4.5 Q16 1.5 13 1.3 M4.2 14.8 L2.5 17 M13.8 14.8 L15.5 17"/></svg>
<svg style="left:39px;top:550px" width="17" height="16" viewBox="0 0 17 16" fill="none" stroke="#a9b0bb" stroke-width="1.05"><rect x="1" y="1" width="15" height="10.5" rx="1.5"/><circle cx="8.5" cy="6.2" r="3"/><path d="M7.3 4.9 H9.8 M7.3 6 H9.8 M7.8 4.9 Q9.2 5 9.2 6 L8 7.5 M8.5 11.5 V14 M4.5 14.5 H12.5"/></svg>
<svg style="left:39px;top:616.5px" width="17" height="17" viewBox="0 0 17 17" fill="none" stroke="#a9b0bb" stroke-width="1.05"><circle cx="2.8" cy="2.8" r="2.1"/><circle cx="2.8" cy="8.5" r="2.1"/><circle cx="2.8" cy="14.2" r="2.1"/><circle cx="8.5" cy="2.8" r="2.1"/><circle cx="8.5" cy="8.5" r="2.1"/><circle cx="8.5" cy="14.2" r="2.1"/><circle cx="14.2" cy="2.8" r="2.1"/><circle cx="14.2" cy="8.5" r="2.1"/><circle cx="14.2" cy="14.2" r="2.1"/></svg>
<div class="a" style="left:1423px;top:3px;width:1px;height:666px;background:#7a7e80;"></div>
<div class="a" style="left:1423px;top:55px;width:1px;height:11px;background:#0a0f14;"></div>
<div class="a" style="left:0px;top:668px;width:1424px;height:1px;background:#747474;"></div>

</body></html>
